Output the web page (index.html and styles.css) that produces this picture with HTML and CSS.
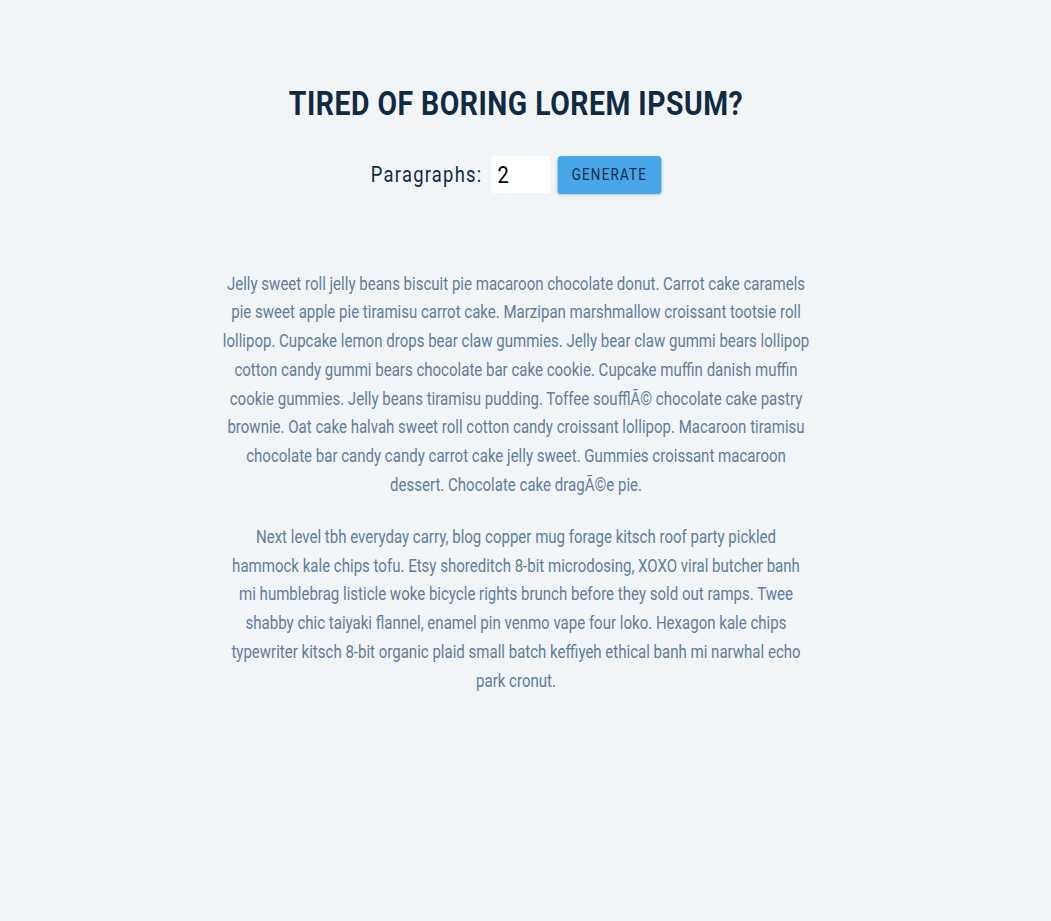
FILE: index.html
```html
<!DOCTYPE html>
<html lang="en">
<head>
<meta charset="utf-8">
<title>Lorem Ipsum Generator</title>
<link rel="stylesheet" href="styles.css">
</head>
<body>
<section class="section-center">
  <h3 class="title">tired of boring lorem ipsum?</h3>
  <form class="lorem-form">
    <label for="amount" class="form-label">paragraphs:</label>
    <input type="number" id="amount" class="form-input" value="2">
    <button type="button" class="btn">generate</button>
  </form>
  <article class="lorem-text">
    <p>Jelly sweet roll jelly beans biscuit pie macaroon chocolate donut. Carrot cake caramels pie sweet apple pie tiramisu carrot cake. Marzipan marshmallow croissant tootsie roll lollipop. Cupcake lemon drops bear claw gummies. Jelly bear claw gummi bears lollipop cotton candy gummi bears chocolate bar cake cookie. Cupcake muffin danish muffin cookie gummies. Jelly beans tiramisu pudding. Toffee soufflÃ© chocolate cake pastry brownie. Oat cake halvah sweet roll cotton candy croissant lollipop. Macaroon tiramisu chocolate bar candy candy carrot cake jelly sweet. Gummies croissant macaroon dessert. Chocolate cake dragÃ©e pie.</p>
    <p>Next level tbh everyday carry, blog copper mug forage kitsch roof party pickled hammock kale chips tofu. Etsy shoreditch 8-bit microdosing, XOXO viral butcher banh mi humblebrag listicle woke bicycle rights brunch before they sold out ramps. Twee shabby chic taiyaki flannel, enamel pin venmo vape four loko. Hexagon kale chips typewriter kitsch 8-bit organic plaid small batch keffiyeh ethical banh mi narwhal echo park cronut.</p>
  </article>
</section>
</body>
</html>
```
FILE: styles.css
```css
* { box-sizing: border-box; margin: 0; padding: 0; }
html, body { background: #f1f5f8; }
body {
  font-family: Roboto, "Open Sans", sans-serif;
  color: #102a42;
  padding-right: 19px;
}
.section-center {
  width: 704px;
  margin: 0 auto;
  padding-top: 82px;
  text-align: center;
  transform: scaleX(0.835);
  transform-origin: center top;
}
.title {
  font-size: 34px;
  font-weight: 700;
  letter-spacing: 0.6px;
  text-transform: uppercase;
  line-height: 1.25;
  color: #102a42;
}
.lorem-form {
  margin-top: 31px;
  display: flex;
  justify-content: center;
  align-items: center;
}
.form-label {
  font-size: 22px;
  letter-spacing: 1.5px;
  text-transform: capitalize;
  color: #102a42;
  margin-right: 10px;
}
.form-input {
  width: 71px;
  height: 37px;
  border: none;
  border-radius: 4px;
  background: #fff;
  font-family: Roboto, sans-serif;
  font-size: 24px;
  padding: 0 8px;
  color: #000;
  margin-right: 9px;
  -moz-appearance: textfield;
}
.form-input::-webkit-inner-spin-button,
.form-input::-webkit-outer-spin-button { -webkit-appearance: none; margin: 0; }
.btn {
  width: 124px;
  height: 38px;
  border: none;
  border-radius: 4px;
  background: #49a6e9;
  color: #102a42;
  font-family: Roboto, sans-serif;
  font-size: 16px;
  letter-spacing: 1.5px;
  text-transform: uppercase;
  box-shadow: 0 1px 3px rgba(0,0,0,0.2);
}
.lorem-text {
  margin-top: 76px;
}
.lorem-text p {
  font-size: 18px;
  line-height: 28.8px;
  color: #617d98;
  margin-bottom: 23px;
}
```
